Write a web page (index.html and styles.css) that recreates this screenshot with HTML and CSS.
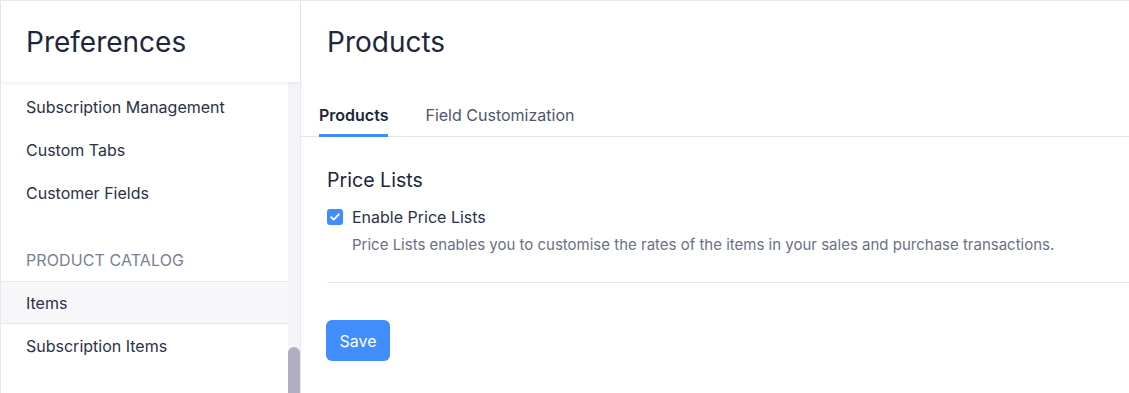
FILE: index.html
```html
<!DOCTYPE html>
<html lang="en">
<head>
    <meta charset="UTF-8">
    <meta name="viewport" content="width=device-width, initial-scale=1.0">
    <title>Preferences - Products</title>
    <link rel="stylesheet" href="styles.css">
</head>
<body>
    <div class="app">
        <aside class="sidebar">
            <div class="sidebar-head">Preferences</div>
            <div class="sidebar-body">
                <ul class="nav">
                    <li class="nav-item">Subscription Management</li>
                    <li class="nav-item">Custom Tabs</li>
                    <li class="nav-item">Customer Fields</li>
                    <li class="nav-group">Product Catalog</li>
                    <li class="nav-item active">Items</li>
                    <li class="nav-item">Subscription Items</li>
                </ul>
                <div class="scrollbar"><div class="thumb"></div></div>
            </div>
        </aside>

        <main class="main">
            <div class="main-head">Products</div>
            <div class="tabs">
                <div class="tab selected">Products</div>
                <div class="tab">Field Customization</div>
            </div>
            <section class="content">
                <h2>Price Lists</h2>
                <label class="check-row">
                    <span class="checkbox">
                        <svg width="12" height="12" viewBox="0 0 12 12"><polyline points="2.2,6.2 4.8,8.7 9.8,3.3" fill="none" stroke="#fff" stroke-width="1.9" stroke-linecap="round" stroke-linejoin="round"/></svg>
                    </span>
                    Enable Price Lists
                </label>
                <p class="hint">Price Lists enables you to customise the rates of the items in your sales and purchase transactions.</p>
                <hr>
                <button class="btn-primary">Save</button>
            </section>
        </main>
    </div>
</body>
</html>
```

FILE: styles.css
```css
body {
    margin: 0;
    font-family: Inter, "Noto Sans", sans-serif;
    color: #21263c;
    background: #fff;
}
.app {
    display: flex;
    height: 100vh;
    border-top: 1px solid #e8e8ec;
    box-sizing: border-box;
    overflow: hidden;
}
.sidebar {
    width: 301px;
    flex-shrink: 0;
    box-sizing: border-box;
    border-left: 1px solid #e8e8ec;
    border-right: 1px solid #e8e8ec;
    display: flex;
    flex-direction: column;
}
.sidebar-head {
    height: 81px;
    padding-left: 25px;
    display: flex;
    align-items: center;
    font-size: 28px;
    box-shadow: 0 2px 4px rgba(0, 0, 0, 0.06);
    position: relative;
    z-index: 1;
}
.sidebar-body {
    flex: 1;
    display: flex;
    min-height: 0;
}
.nav {
    flex: 1;
    list-style: none;
    margin: 0;
    padding: 3px 0 0;
}
.nav-item {
    height: 41px;
    line-height: 42px;
    padding-left: 25px;
    font-size: 16px;
    color: #2c3145;
    border-top: 1px solid transparent;
    border-bottom: 1px solid transparent;
}
.nav-item.active {
    background: #f7f7fa;
    border-color: #e7e7ee;
}
.nav-group {
    margin-top: 24px;
    height: 43px;
    line-height: 44px;
    padding-left: 25px;
    font-size: 16px;
    text-transform: uppercase;
    letter-spacing: 0.1px;
    color: #7b7f93;
}
.scrollbar {
    width: 12px;
    background: #f4f4fb;
    display: flex;
    flex-direction: column;
    justify-content: flex-end;
}
.thumb {
    height: 46px;
    background: #b0aec0;
    border-radius: 6px 6px 0 0;
}
.main {
    flex: 1;
    min-width: 0;
}
.main-head {
    height: 81px;
    padding-left: 26px;
    display: flex;
    align-items: center;
    font-size: 28px;
}
.tabs {
    display: flex;
    gap: 37px;
    padding-left: 18px;
    border-bottom: 1px solid #e3e3e8;
}
.tab {
    padding: 24px 0 10px;
    line-height: 18px;
    font-size: 16px;
    color: #51566b;
    border-bottom: 3px solid transparent;
    margin-bottom: -1px;
}
.tab.selected {
    font-weight: 600;
    color: #21263c;
    border-bottom-color: #408dfb;
}
.content {
    padding: 31px 0 0 26px;
}
.content h2 {
    margin: 0 0 15px;
    font-size: 19.6px;
    font-weight: 400;
    line-height: 24px;
}
.check-row {
    display: flex;
    align-items: center;
    gap: 9px;
    font-size: 16px;
    line-height: 20px;
    color: #2c3145;
}
.checkbox {
    width: 16px;
    height: 16px;
    border-radius: 3px;
    background: #408dfb;
    display: flex;
    align-items: center;
    justify-content: center;
}
.hint {
    margin: 8px 0 0 25px;
    font-size: 15px;
    line-height: 20px;
    color: #6b7086;
}
.content hr {
    margin: 27px 0 0;
    border: 0;
    border-top: 1px solid #e3e3e8;
}
.btn-primary {
    margin-top: 37px;
    margin-left: -1px;
    width: 64px;
    height: 41px;
    border: 0;
    border-radius: 6px;
    background: #408dfb;
    color: #fff;
    font-family: inherit;
    font-size: 16px;
}
```
